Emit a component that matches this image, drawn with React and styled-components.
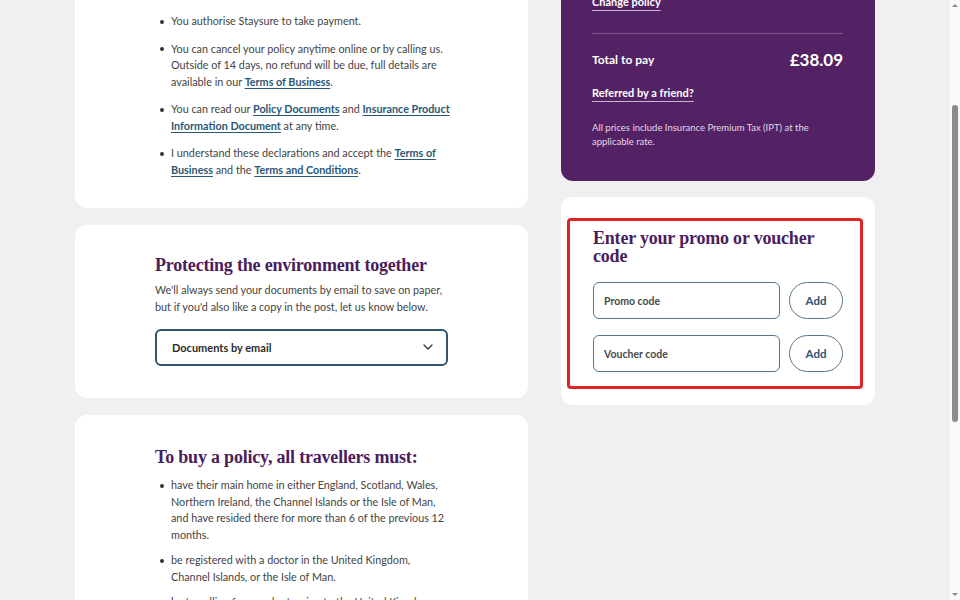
import React, { useLayoutEffect, useRef } from "react";
import styled, { createGlobalStyle } from "styled-components";

const GlobalStyle = createGlobalStyle`
  html, body {
    margin: 0;
    padding: 0;
    background: #f0f0f0;
    overflow: hidden;
  }
  body {
    font-family: Lato, "Liberation Sans", sans-serif;
    color: #404040;
  }
`;

const Screen = styled.div`
  display: flex;
  height: 600px;
  width: 960px;
`;

const Viewport = styled.div`
  flex: 1;
  height: 600px;
  overflow: hidden;
`;

const Page = styled.div`
  display: grid;
  grid-template-columns: 453px 314px;
  column-gap: 33px;
  align-items: start;
  padding: 24px 0 120px 75px;
`;

const Column = styled.div`
  display: flex;
  flex-direction: column;
  gap: ${p => p.gap || 16}px;
`;

const Card = styled.section`
  background: #fff;
  border-radius: 12px;
  padding: ${p => p.pad || "30px 80px 32px"};
`;

const Heading = styled.h2`
  margin: 0 0 ${p => p.mb ?? 6}px;
  font-family: "Liberation Serif", "DejaVu Serif", serif;
  font-weight: 700;
  font-size: ${p => p.size || 18}px;
  line-height: ${p => p.lh || 1.2};
  color: #4a1d5c;
  letter-spacing: -0.2px;
`;

const Para = styled.p`
  margin: 0;
  font-size: 10.8px;
  line-height: 17px;
  color: #444;
`;

const List = styled.ul`
  list-style: none;
  margin: 0;
  padding: 0 0 0 5px;
  display: flex;
  flex-direction: column;
  gap: ${p => p.gap || 10}px;
`;

const Item = styled.li`
  display: flex;
  gap: 7px;
  font-size: 10.8px;
  line-height: 16.5px;
  color: #444;
`;

const Dot = styled.span`
  flex: none;
  width: 4px;
  height: 4px;
  border-radius: 50%;
  background: #333;
  margin-top: 6.5px;
`;

const Link = styled.a`
  color: #2a5876;
  font-weight: 700;
  text-decoration: underline;
  text-underline-offset: 2px;
`;

const Select = styled.div`
  margin-top: 14px;
  height: 37px;
  box-sizing: border-box;
  border: 2px solid #2e5470;
  border-radius: 6px;
  display: flex;
  align-items: center;
  justify-content: space-between;
  padding: 0 12px 0 15px;
  font-size: 11px;
  font-weight: 700;
  color: #2b2b2b;
`;

const Summary = styled.section`
  background: #532265;
  border-radius: 12px;
  padding: 55px 32px 32px 31px;
  color: #fff;
`;

const SummaryRow = styled.div`
  display: flex;
  justify-content: space-between;
  align-items: center;
  font-size: ${p => p.size || 11}px;
  font-weight: ${p => p.weight || 400};
  margin-bottom: ${p => p.mb || 0}px;
`;

const LightLink = styled.a`
  color: #fff;
  font-weight: 700;
  font-size: 11px;
  text-decoration: underline;
  text-underline-offset: 4px;
  text-decoration-color: #c9b3d3;
`;

const Divider = styled.hr`
  border: none;
  border-top: 1px solid #7b5590;
  margin: ${p => p.m || "24px 0 17px"};
`;

const Total = styled.span`
  font-size: ${p => p.size}px;
  font-weight: 700;
`;

const Small = styled.p`
  margin: 21px 0 0;
  font-size: 9.5px;
  line-height: 14px;
  color: #e4d8ea;
`;

const PromoCard = styled.section`
  background: #fff;
  border-radius: 12px;
  padding: 21px 12px 16px 6px;
`;

const Highlight = styled.div`
  border: 3px solid #e02424;
  border-radius: 4px;
  padding: 8px 17px 14px 23px;
`;

const CodeRow = styled.div`
  display: flex;
  gap: 9px;
  margin-top: ${p => p.mt || 0}px;
`;

const CodeInput = styled.div`
  flex: 1;
  height: 37px;
  box-sizing: border-box;
  border: 1px solid #55768a;
  border-radius: 6px;
  display: flex;
  align-items: center;
  padding-left: 10px;
  font-size: 10.5px;
  font-weight: 700;
  color: #4a4a4a;
`;

const AddButton = styled.button`
  width: 54px;
  height: 37px;
  border: 1px solid #55768a;
  border-radius: 20px;
  background: #fff;
  font-family: inherit;
  font-size: 11.5px;
  font-weight: 700;
  color: #2e5470;
`;

const Scrollbar = styled.div`
  width: 10px;
  height: 600px;
  background: #f9f9f9;
  display: flex;
  flex-direction: column;
  align-items: center;
  justify-content: space-between;
  padding: 4px 0;
  box-sizing: border-box;
`;

const Arrow = styled.span`
  width: 0;
  height: 0;
  border-left: 3px solid transparent;
  border-right: 3px solid transparent;
  ${p => (p.down ? "border-top: 3px solid #8a8a8a;" : "border-bottom: 3px solid #8a8a8a;")}
`;

const Track = styled.div`
  flex: 1;
  width: 6px;
  padding: 98px 0 171px;
  box-sizing: border-box;
`;

const Thumb = styled.div`
  height: 100%;
  background: #8b8b8b;
  border-radius: 3px;
`;

const Chevron = () => (
  <svg width="12" height="12" viewBox="0 0 12 12" fill="none">
    <path d="M2 4l4 4 4-4" stroke="#333" strokeWidth="1.3" strokeLinecap="round" strokeLinejoin="round" />
  </svg>
);

export default function App() {
  const viewRef = useRef(null);
  const markRef = useRef(null);

  useLayoutEffect(() => {
    const view = viewRef.current;
    const mark = markRef.current;
    if (view && mark) {
      view.scrollTop = mark.getBoundingClientRect().top - view.getBoundingClientRect().top - 13;
    }
  }, []);

  return (
    <>
      <GlobalStyle />
      <Screen>
        <Viewport ref={viewRef}>
          <Page>
            <Column gap={17}>
              <Card pad="30px 74px 30px 80px">
                <Heading mb={14}>Declarations</Heading>
                <List gap={11}>
                  <Item>
                    <Dot />
                    <span>
                      You have read and understood the key information about your
                      cover, including any exclusions that apply to your policy.
                    </span>
                  </Item>
                  <Item ref={markRef}>
                    <Dot />
                    <span>You authorise Staysure to take payment.</span>
                  </Item>
                  <Item>
                    <Dot />
                    <span>
                      You can cancel your policy anytime online or by calling us.
                      Outside of 14 days, no refund will be due, full details are
                      available in our <Link>Terms of Business</Link>.
                    </span>
                  </Item>
                  <Item>
                    <Dot />
                    <span>
                      You can read our <Link>Policy Documents</Link> and{" "}
                      <Link>Insurance Product Information Document</Link> at any time.
                    </span>
                  </Item>
                  <Item>
                    <Dot />
                    <span>
                      I understand these declarations and accept the{" "}
                      <Link>Terms of Business</Link> and the{" "}
                      <Link>Terms and Conditions</Link>.
                    </span>
                  </Item>
                </List>
              </Card>

              <Card>
                <Heading mb={4}>Protecting the environment together</Heading>
                <Para>
                  We'll always send your documents by email to save on paper,
                  but if you'd also like a copy in the post, let us know below.
                </Para>
                <Select>
                  <span>Documents by email</span>
                  <Chevron />
                </Select>
              </Card>

              <Card pad="32px 80px 32px">
                <Heading mb={9}>To buy a policy, all travellers must:</Heading>
                <List gap={9}>
                  <Item>
                    <Dot />
                    <span>
                      have their main home in either England, Scotland, Wales,
                      Northern Ireland, the Channel Islands or the Isle of Man,
                      and have resided there for more than 6 of the previous 12
                      months.
                    </span>
                  </Item>
                  <Item>
                    <Dot />
                    <span>
                      be registered with a doctor in the United Kingdom, Channel
                      Islands, or the Isle of Man.
                    </span>
                  </Item>
                  <Item>
                    <Dot />
                    <span>
                      be travelling from and returning to the United Kingdom,
                      Channel Islands or the Isle of Man.
                    </span>
                  </Item>
                </List>
              </Card>
            </Column>

            <Column>
              <Summary>
                <SummaryRow size={12} weight={700} mb={10}>
                  <span>Your policy</span>
                </SummaryRow>
                <SummaryRow mb={10}>
                  <span>Single trip, Europe</span>
                  <span>£38.09</span>
                </SummaryRow>
                <LightLink>Change policy</LightLink>
                <Divider m="24px 0 15px" />
                <SummaryRow mb={11}>
                  <Total size={12}>Total to pay</Total>
                  <Total size={17}>£38.09</Total>
                </SummaryRow>
                <LightLink>Referred by a friend?</LightLink>
                <Small>
                  All prices include Insurance Premium Tax (IPT) at the
                  applicable rate.
                </Small>
              </Summary>

              <PromoCard>
                <Highlight>
                  <Heading lh="18px" mb={17}>
                    Enter your promo or voucher code
                  </Heading>
                  <CodeRow>
                    <CodeInput>Promo code</CodeInput>
                    <AddButton>Add</AddButton>
                  </CodeRow>
                  <CodeRow mt={16}>
                    <CodeInput>Voucher code</CodeInput>
                    <AddButton>Add</AddButton>
                  </CodeRow>
                </Highlight>
              </PromoCard>
            </Column>
          </Page>
        </Viewport>
        <Scrollbar>
          <Arrow />
          <Track>
            <Thumb />
          </Track>
          <Arrow down />
        </Scrollbar>
      </Screen>
    </>
  );
}
